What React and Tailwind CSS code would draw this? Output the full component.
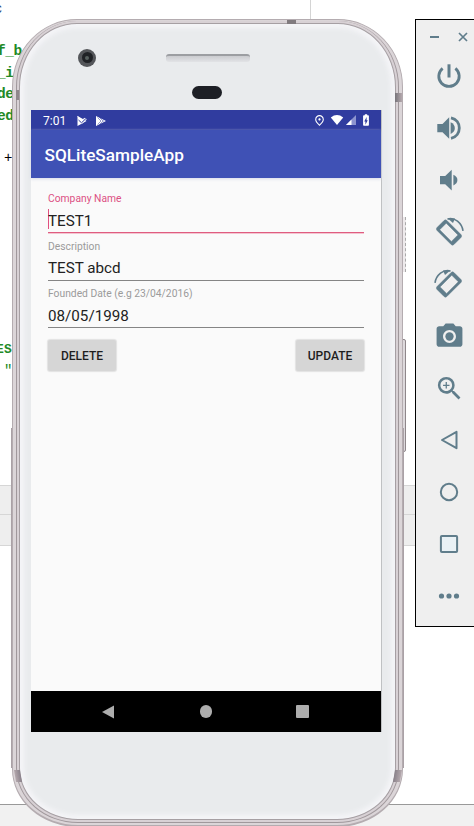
import React from "react";
import {
  MdPhotoCamera,
  MdZoomIn,
  MdOutlinePlace,
  MdBatteryChargingFull,
} from "react-icons/md";

const codeRows = [
  { text: "f_b", top: "mt-[41px]" },
  { text: "_i", top: "mt-[2px]" },
  { text: "de", top: "mt-[2px]" },
  { text: "ed", top: "mt-[2px]" },
];

function Editor() {
  return (
    <div className="absolute inset-0 flex flex-col overflow-hidden bg-white">
      <div className="flex h-[485px] shrink-0">
        <div className="relative h-full w-[310px] shrink-0 overflow-hidden font-['Liberation_Mono',monospace] text-[14.500px] leading-[20px] text-[#228a26]">
          <div className="-mb-[14px] -ml-[6px] h-[14px] text-[14px] leading-[18px] text-[#2a4a80]">c</div>
          {codeRows.map((row) => (
            <div key={row.text} className={`-ml-[3px] h-[19.5px] whitespace-pre font-bold tracking-[-0.500px] ${row.top}`}>
              {row.text}
            </div>
          ))}
          <div className="mt-[23px] h-[20px] pl-[4px] text-[14px] text-black">+</div>
          <div className="mt-[25px] -ml-[6px] h-[20px] text-[14px] text-[#2a4a80]">,</div>
          <div className="mt-[127px] -ml-[4px] h-[20px] text-[13px] font-bold tracking-[0.3px]">ES</div>
          <div className="mt-px h-[20px] pl-[4px] text-[14px]">"</div>
        </div>
        <div className="h-[20px] w-px bg-[#d4d4d4]" />
      </div>
      <div className="h-[30px] shrink-0 border-y border-[#d6d6d6] bg-[#eeeeee]" />
      <div className="h-[31px] shrink-0 border-b border-[#d6d6d6] bg-[#eeeeee]" />
      <div className="grow" />
      <div className="h-[22px] shrink-0 border-t border-[#999] bg-[#f1f1f1]" />
    </div>
  );
}

function StatusBar() {
  return (
    <div className="flex h-[20px] shrink-0 items-center bg-[#303c9f] pl-[12px] pr-[8px] text-white">
      <span className="w-[33px] pt-[2px] text-[12px] leading-[20px]">7:01</span>
      <svg className="mt-px h-[12px] w-[12px]" viewBox="0 0 12 12">
        <path d="M1.500 .8L5.500 4.700 9 2.800 10.800 4.200 5.600 9.200 2.900 6.600 3.900 5.500 5.600 7.100 8.800 4.200 5.500 5.600 1.500 1.800z" fill="#fff" />
        <path d="M1.500 1v10L10.500 6z" fill="#fff" />
        <path d="M2.500 5l3 2.800L10.500 3" stroke="#303c9f" strokeWidth="1" fill="none" />
      </svg>
      <svg className="ml-[6.500px] mt-px h-[12px] w-[12px]" viewBox="0 0 12 12">
        <path d="M1 1l10 5L1 11z" fill="#fff" />
        <path d="M2.500 2.500L6 6 2.500 9.500M4.500 2.500l4 4M4.500 9.500l4-4" stroke="#303c9f" strokeWidth=".5" fill="none" />
      </svg>
      <div className="ml-auto flex items-center">
        <MdOutlinePlace size={13} />
        <svg className="ml-[4px] h-[12px] w-[14px]" viewBox="0 0 14 12">
          <path d="M.8 3.500Q7-1.300 13.200 3.500L7 11z" fill="#fff" />
        </svg>
        <svg className="ml-[1px] h-[12px] w-[12px]" viewBox="0 0 12 12">
          <path d="M11 1v10H1z" fill="#8d94cf" />
          <path d="M6.500 5.500V11H1z" fill="#fff" />
        </svg>
        <MdBatteryChargingFull size={14} className="ml-[2px]" />
      </div>
    </div>
  );
}

function Field({ label, value, active }) {
  return (
    <div className="flex h-[47.500px] flex-col">
      <label className={`h-[14px] pt-px text-[10.300px] leading-[15px] ${active ? "text-[#dc5083]" : "text-[#9b9b9b]"}`}>
        {label}
      </label>
      <div
        className={`flex h-[29px] items-center border-b pt-[5px] text-[15.200px] leading-[20px] text-[#222] ${
          active ? "border-[#df5c80] shadow-[0_1px_0_#f4c4d0]" : "border-[#858585]"
        }`}
      >
        {active && <span className="-mr-px -mt-[3px] h-[20px] w-px bg-[#e25080]" />}
        <span>{value}</span>
      </div>
    </div>
  );
}

function ActionButton({ children }) {
  return (
    <button className="h-[31px] w-[68px] rounded-[2px] bg-[#d6d6d6] pt-px text-[12px] font-medium text-[#1e1e1e] shadow-[0_0_1px_1px_#e2e2e2]">
      {children}
    </button>
  );
}

function Screen() {
  return (
    <div className="relative -left-[1.500px] flex h-[622px] w-[350px] flex-col bg-[#fafafa] font-[Roboto,sans-serif] shadow-[1px_0_0_#bfc1c3]">
      <StatusBar />
      <div className="flex h-[48px] shrink-0 items-center bg-[#3f51b5] pl-[13.500px] pt-[3px] text-[17.200px] font-medium text-white shadow-[0_1px_3px_#d5d8e8]">
        <span>SQLiteSampleApp</span>
      </div>
      <div className="flex grow flex-col px-[17px] pt-[12px]">
        <Field label="Company Name" value="TEST1" active />
        <Field label="Description" value="TEST abcd" />
        <Field label="Founded Date (e.g 23/04/2016)" value="08/05/1998" />
        <div className="mt-[7px] flex justify-between">
          <ActionButton>DELETE</ActionButton>
          <ActionButton>UPDATE</ActionButton>
        </div>
      </div>
      <div className="flex h-[41px] shrink-0 items-center bg-black pl-[70px]">
        <svg className="h-[14px] w-[14px]" viewBox="0 0 14 14">
          <path d="M13 .4v13.200L1 7z" fill="#adadad" />
        </svg>
        <div className="ml-[84.500px] h-[12.500px] w-[12.500px] rounded-full bg-[#adadad]" />
        <div className="ml-[84px] h-[13px] w-[13px] rounded-[1px] bg-[#adadad]" />
      </div>
    </div>
  );
}

function Phone() {
  return (
    <div className="absolute left-[12px] top-[19px] h-[808px] w-[391px]">
      <div className="absolute left-[390px] top-[198px] h-[55px] w-[4px] border-r border-dashed border-[#aaa] bg-[#eeeaec]" />
      <div className="absolute left-[390px] top-[320px] h-[113px] w-[4px] rounded-r-[2px] border border-[#8f878b] bg-[#ddd9dc]" />
      <div className="absolute -left-px top-[409px] h-[340px] w-[393px] bg-[#aaa1a6]" />
      <div className="absolute inset-0 rounded-b-[66px_58px] rounded-t-[65px_68px] border-x border-b-2 border-t border-[#b4acb0] bg-[#dbd5d8] px-[3px] pb-[2px] pt-px">
        <div className="h-full rounded-b-[62px_55px] rounded-t-[61px_66px] border-x border-b border-t-0 border-[#a0989c] bg-[#d8d1d5] p-[2px]">
          <div className="flex h-full flex-col items-center rounded-b-[59px_52px] rounded-t-[58px_64px] border border-[#a69fa3] bg-[#e9ebed] shadow-[inset_0_0_5px_4px_#f5f5f8]">
            <div className="flex h-[86px] w-full shrink-0 flex-col items-center">
              <div className="flex h-[62px] w-full items-center">
                <div className="ml-[58px] mt-[5px] flex h-[18px] w-[18px] items-center justify-center rounded-full bg-[#54565a]">
                  <div className="flex h-[11px] w-[11px] items-center justify-center rounded-full bg-[#202226]">
                    <div className="h-[4px] w-[4px] rounded-full bg-[#57605f]" />
                  </div>
                </div>
                <div className="ml-[70px] mt-[6px] h-[8px] w-[84px] rounded-[3px] border-t-2 border-[#9c9ea2] bg-gradient-to-b from-[#cbccd0] to-[#e2e3e6]" />
              </div>
              <div className="-ml-px h-[13px] w-[30px] rounded-full bg-[#1d1f25]" />
            </div>
            <Screen />
          </div>
        </div>
      </div>
      <div className="absolute left-[275px] top-[1px] h-[4px] w-[9px] bg-[#817b7f]" />
      <div className="absolute left-[4px] top-[71px] h-[10px] w-[3px] bg-[#8f878b]" />
      <div className="absolute left-[383px] top-[74px] h-[9px] w-[7px] bg-gradient-to-r from-[#77747a] to-[#b5a9ae]" />
      <div className="absolute left-[3px] top-[751px] h-[12px] w-[6px] -skew-x-[-10deg] bg-gradient-to-r from-[#b5a9ae] to-[#89818a]" />
      <div className="absolute left-[382px] top-[751px] h-[12px] w-[7px] -skew-x-[10deg] bg-gradient-to-r from-[#89818a] to-[#b5a9ae]" />
    </div>
  );
}

function RotateIcon({ mirrored }) {
  return (
    <svg className={`h-[32px] w-[32px] ${mirrored ? "-scale-x-100" : ""}`} viewBox="0 0 32 32">
      <path
        transform="translate(16 16.500) rotate(-45)"
        fillRule="evenodd"
        d="M-5-12h10a2 2 0 0 1 2 2v20a2 2 0 0 1-2 2H-5a2 2 0 0 1-2-2v-20a2 2 0 0 1 2-2zM-4.600-8.500V8h9.200V-8.500z"
        fill="currentColor"
        stroke="currentColor"
        strokeWidth=".4"
      />
      <path d="M14.500 3.200Q19 1.200 24.500 5.100 29.300 9 30 14.800" fill="none" stroke="currentColor" strokeWidth="1.600" />
      <path d="M14.500 2.300l7.500.2-2 4.500z" fill="currentColor" />
    </svg>
  );
}

function Line({ children }) {
  return (
    <svg className="h-[32px] w-[32px]" viewBox="0 0 32 32" fill="none" stroke="currentColor" strokeWidth="2">
      {children}
    </svg>
  );
}

const tools = [
  <Line>
    <path d="M16 4.300v13.200" strokeWidth="3" />
    <path d="M9.600 8.300A10.200 10.200 0 1 0 22.400 8.300" strokeWidth="2.800" />
  </Line>,
  <Line>
    <g fill="currentColor" stroke="none">
      <path d="M4.300 12v8.200h5.200l6.700 6.600V5.300L9.500 12z" />
      <path d="M17.600 10.200q4.200 1.800 4.200 5.900t-4.200 5.900z" />
    </g>
    <path d="M18 5.800C23.600 7 26.300 11.500 26.300 16S23.600 25 18 26.300" strokeWidth="2.800" />
  </Line>,
  <Line>
    <g fill="currentColor" stroke="none">
      <path d="M7 12v8.200h5.200l6.500 6.200V5.800L12.200 12z" />
      <path d="M20.400 10.800q4 1.600 4 5.300t-4 5.300z" />
    </g>
  </Line>,
  <RotateIcon />,
  <RotateIcon mirrored />,
  <MdPhotoCamera size={31} />,
  <MdZoomIn size={31} />,
  <Line><path d="M23.500 7.800v16.400L9 16z" strokeLinejoin="round" /></Line>,
  <Line><circle cx="16" cy="16" r="8.200" /></Line>,
  <Line><rect x="7.900" y="7.900" width="16.200" height="16.200" rx="1" fill="#e9f1f5" /></Line>,
  <Line>
    <g fill="currentColor" stroke="none">
      <circle cx="8.500" cy="16" r="2.600" />
      <circle cx="16" cy="16" r="2.600" />
      <circle cx="23.500" cy="16" r="2.600" />
    </g>
  </Line>,
];

function Toolbar() {
  return (
    <aside className="absolute left-[415px] top-[19px] flex h-[608px] w-[68px] flex-col border border-black bg-[#efefef] text-[#607d8b]">
      <div className="flex h-[30px] items-center pl-[14px] pt-[4px]">
        <div className="h-[1.500px] w-[9px] bg-current" />
        <svg className="ml-[19px] h-[10px] w-[10px]" viewBox="0 0 10 10">
          <path d="M1 1l8 8M9 1L1 9" stroke="currentColor" strokeWidth="1.700" />
        </svg>
      </div>
      {tools.map((tool, i) => (
        <div key={i} className="flex h-[52px] shrink-0 items-center justify-center">
          {tool}
        </div>
      ))}
    </aside>
  );
}

export default function App() {
  return (
    <main className="relative h-[826px] w-[474px] overflow-hidden bg-white">
      <Editor />
      <Phone />
      <Toolbar />
    </main>
  );
}
